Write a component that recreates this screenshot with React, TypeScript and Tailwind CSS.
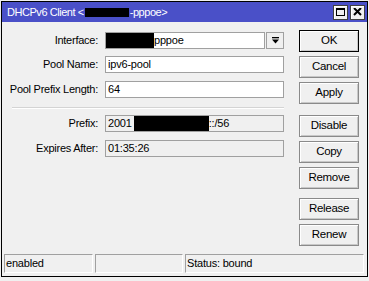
import React from "react";

const font = { fontFamily: '"Liberation Sans", Arial, sans-serif' };

function Btn({ label, def = false, className = "" }: { label: string; def?: boolean; className?: string }) {
  return (
    <div
      className={`w-[60px] h-[22px] flex items-center justify-center text-[11.5px] text-black bg-[#f0f0f0] border ${
        def ? "border-black" : "border-[#8a8a8a]"
      } shadow-[inset_1px_1px_0_#ffffff,inset_-1px_-1px_0_#c8c8c8] tracking-[-0.3px] ${className}`}
    >
      {label}
    </div>
  );
}

function Row({ label, children, className = "" }: { label: string; children: React.ReactNode; className?: string }) {
  return (
    <div className={`flex items-center h-[17px] ${className}`}>
      <div className="w-[97px] text-right text-[11px] tracking-[-0.25px] text-black leading-none pr-[1px]">{label}</div>
      <div className="ml-[6px] w-[179px] h-[17px] flex">{children}</div>
    </div>
  );
}

export default function App() {
  return (
    <div className="w-[369px] h-[281px] bg-[#f0f0f0] pt-[1px] pl-[1px] overflow-hidden" style={font}>
      <div className="w-[367px] h-[276px] border border-black flex flex-col bg-[#f0f0f0]">
        {/* Title bar */}
        <div className="h-[20px] bg-[#4a50c8] flex items-center pl-[5px] pr-[2px] text-white text-[11px] tracking-[-0.45px]">
          <span>DHCPv6 Client &lt;</span>
          <span className="inline-block w-[44px] h-[9px] bg-black mx-[1px]" />
          <span>-pppoe&gt;</span>
          <div className="ml-auto flex gap-[2px]">
            <div className="w-[15px] h-[15px] bg-[#f0f0f0] border border-[#404040] shadow-[inset_1px_1px_0_#ffffff] flex items-center justify-center">
              <div className="w-[9px] h-[8px] border border-black border-t-2" />
            </div>
            <div className="w-[15px] h-[15px] bg-[#f0f0f0] border border-[#404040] shadow-[inset_1px_1px_0_#ffffff] flex items-center justify-center">
              <svg width="9" height="8" viewBox="0 0 9 8">
                <path d="M1 0 L8 7 M8 0 L1 7" stroke="black" strokeWidth="2" />
              </svg>
            </div>
          </div>
        </div>

        {/* Body */}
        <div className="flex-1 flex">
          <div className="pt-[10px] flex flex-col">
            <Row label="Interface:">
              <div className="w-[160px] h-[17px] bg-white border border-[#a0a0a0] flex items-center text-[11px] text-black">
                <span className="inline-block w-[48px] h-[15px] bg-black" />
                <span className="tracking-[-0.2px]">pppoe</span>
              </div>
              <div className="ml-[1px] w-[18px] h-[17px] bg-[#f0f0f0] border border-[#a0a0a0] flex items-center justify-center">
                <svg width="7" height="7" viewBox="0 0 7 7">
                  <rect x="0" y="0" width="7" height="1.3" fill="black" />
                  <path d="M0 2.5 H7 L3.5 6.5 Z" fill="black" />
                </svg>
              </div>
            </Row>
            <Row label="Pool Name:" className="mt-[7px]">
              <div className="w-full h-[17px] bg-white border border-[#a0a0a0] flex items-center pl-[2px] text-[11px] tracking-[-0.2px] text-black">
                ipv6-pool
              </div>
            </Row>
            <Row label="Pool Prefix Length:" className="mt-[8px]">
              <div className="w-full h-[17px] bg-white border border-[#a0a0a0] flex items-center pl-[2px] text-[11px] tracking-[-0.2px] text-black">
                64
              </div>
            </Row>
            <div className="ml-[10px] mt-[9px] w-[272px] h-[2px] border-t border-[#d4d4d4] border-b border-b-white" />
            <Row label="Prefix:" className="mt-[6px]">
              <div className="w-full h-[17px] bg-[#f0f0f0] border border-[#a0a0a0] flex items-center pl-[2px] text-[11px] tracking-[-0.2px] text-black">
                <span>2001</span>
                <span className="inline-block w-[75px] h-[15px] bg-black ml-[2px]" />
                <span>::/56</span>
              </div>
            </Row>
            <Row label="Expires After:" className="mt-[8px]">
              <div className="w-full h-[17px] bg-[#f0f0f0] border border-[#a0a0a0] flex items-center pl-[2px] text-[11px] tracking-[-0.2px] text-black">
                01:35:26
              </div>
            </Row>
          </div>
          <div className="ml-[15px] pt-[8px] flex flex-col">
            <Btn label="OK" def />
            <Btn label="Cancel" className="mt-[4px]" />
            <Btn label="Apply" className="mt-[4px]" />
            <Btn label="Disable" className="mt-[11px]" />
            <Btn label="Copy" className="mt-[4px]" />
            <Btn label="Remove" className="mt-[4px]" />
            <Btn label="Release" className="mt-[9px]" />
            <Btn label="Renew" className="mt-[4px]" />
          </div>
        </div>

        {/* Status bar */}
        <div className="h-[19px] mb-[3px] flex pl-[2px] pr-[3px] gap-[2px] text-[11px] tracking-[-0.2px] text-black">
          <div className="w-[89px] h-full border-t border-l border-[#a0a0a0] border-r border-b border-r-white border-b-white flex items-center pl-[1px]">
            enabled
          </div>
          <div className="w-[88px] h-full border-t border-l border-[#a0a0a0] border-r border-b border-r-white border-b-white" />
          <div className="flex-1 h-full border-t border-l border-[#a0a0a0] border-r border-b border-r-white border-b-white flex items-center pl-[1px]">
            Status: bound
          </div>
        </div>
      </div>
    </div>
  );
}
